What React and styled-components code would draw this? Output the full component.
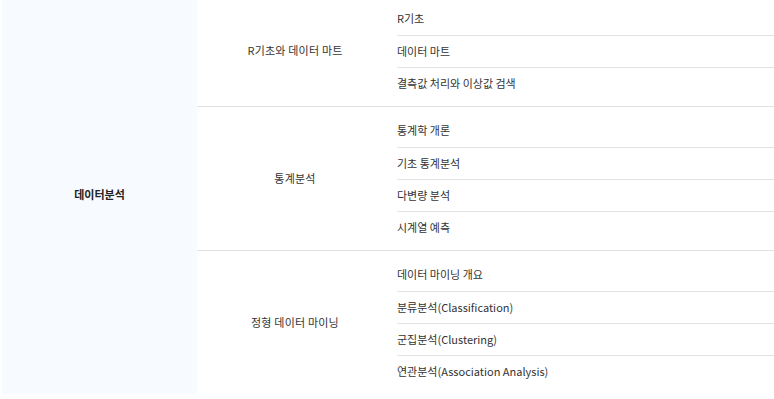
import styled, { createGlobalStyle } from "styled-components";

const curriculum = {
    category: "데이터분석",
    groups: [
        {
            title: "R기초와 데이터 마트",
            items: ["R기초", "데이터 마트", "결측값 처리와 이상값 검색"],
        },
        {
            title: "통계분석",
            items: ["통계학 개론", "기초 통계분석", "다변량 분석", "시계열 예측"],
        },
        {
            title: "정형 데이터 마이닝",
            items: [
                "데이터 마이닝 개요",
                "분류분석(Classification)",
                "군집분석(Clustering)",
                "연관분석(Association Analysis)",
            ],
        },
    ],
};

export default function App() {
    return (
        <>
            <GlobalStyle />
            <Table>
                <Category>{curriculum.category}</Category>
                <Groups>
                    {curriculum.groups.map((group) => (
                        <Group key={group.title}>
                            <GroupTitle>{group.title}</GroupTitle>
                            <ItemList>
                                {group.items.map((item) => (
                                    <Item key={item}>{item}</Item>
                                ))}
                            </ItemList>
                        </Group>
                    ))}
                </Groups>
            </Table>
        </>
    );
}

const GlobalStyle = createGlobalStyle`
* {
    box-sizing: border-box;
}
body {
    margin: 0;
    background: #ffffff;
    font-family: "Noto Sans CJK KR", "Noto Sans", sans-serif;
    overflow: hidden;
}
`;

const Table = styled.div`
display: flex;
width: 100%;
margin-top: -5px;
padding-left: 2px;
`;

const Category = styled.div`
width: 195px;
flex-shrink: 0;
display: flex;
align-items: center;
justify-content: center;
padding-bottom: 2px;
background: #f7fbff;
color: #222222;
font-size: 11px;
font-weight: 700;
`;

const Groups = styled.div`
flex: 1;
display: flex;
flex-direction: column;
`;

const Group = styled.div`
display: flex;
border-bottom: 1px solid #e2e2e2;
&:last-child {
    border-bottom: none;
}
`;

const GroupTitle = styled.div`
width: 196px;
flex-shrink: 0;
display: flex;
align-items: center;
justify-content: center;
padding-bottom: 2px;
color: #333333;
font-size: 11px;
letter-spacing: 0.2px;
`;

const ItemList = styled.ul`
flex: 1;
list-style: none;
margin: 0 0 0 4px;
padding: 8px 0 7px;
`;

const Item = styled.li`
height: 32px;
display: flex;
align-items: center;
padding-bottom: 2px;
color: #333333;
font-size: 11px;
& + & {
    border-top: 1px solid #e2e2e2;
}
`;
